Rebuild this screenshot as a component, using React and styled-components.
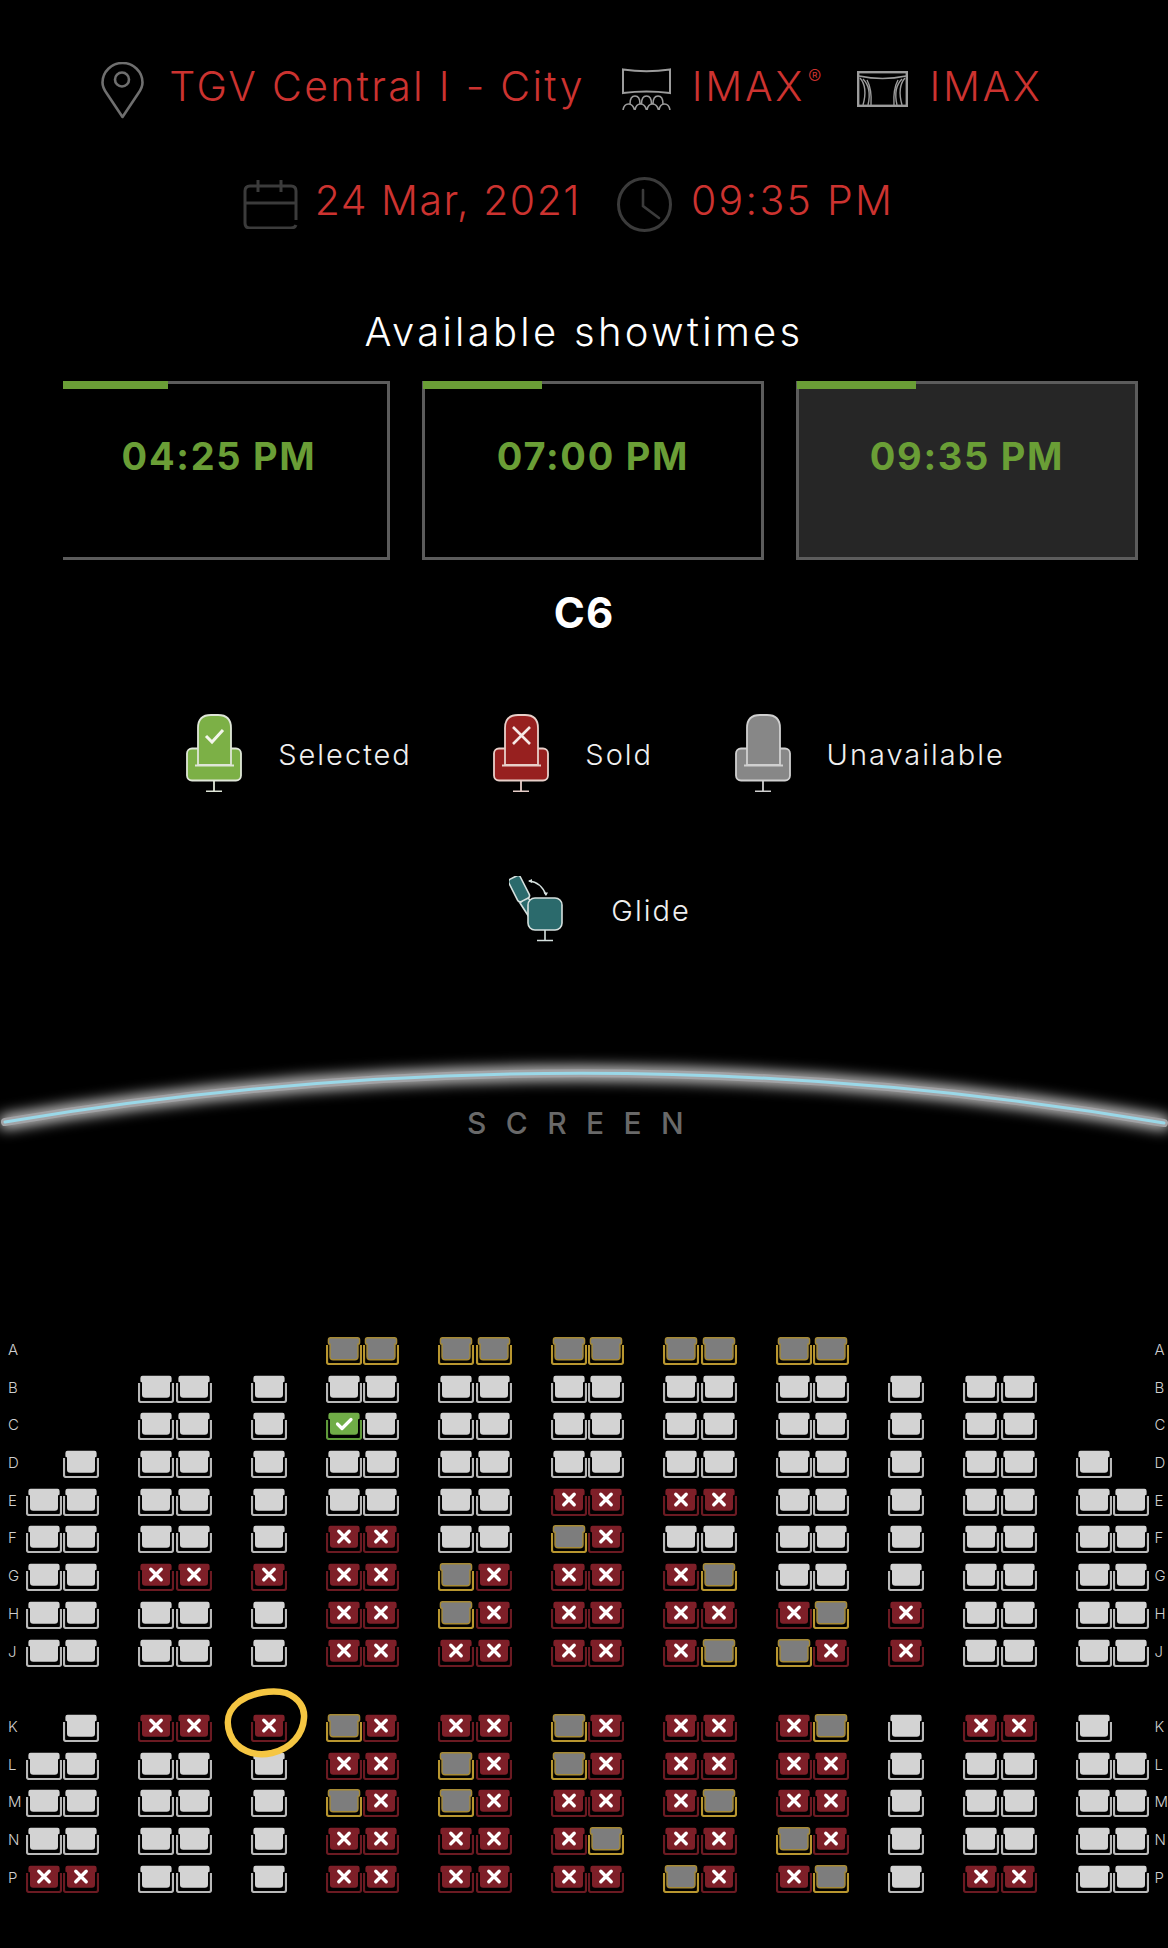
import React from "react";
import styled, { createGlobalStyle } from "styled-components";

const Global = createGlobalStyle`
  html, body { margin: 0; padding: 0; background: #000; }
  body { font-family: "Inter", "Liberation Sans", sans-serif; }
`;

const Page = styled.div`
  width: 1168px;
  height: 1948px;
  background: #000;
  overflow: hidden;
  color: #fff;
  padding-top: 60px;
  box-sizing: border-box;
`;

const InfoRow = styled.div`
  display: flex;
  align-items: center;
  justify-content: center;
  height: 60px;
  padding-right: ${(p) => p.$pr}px;
  margin-top: ${(p) => p.$mt || 0}px;
`;

const InfoIcon = styled.svg`
  display: block;
  flex: none;
  margin-left: ${(p) => p.$ml || 0}px;
  margin-right: ${(p) => p.$mr || 0}px;
  position: relative;
  top: ${(p) => p.$dy || 0}px;
`;

const InfoText = styled.span`
  font-size: 41px;
  font-weight: 300;
  color: #cc3330;
  letter-spacing: ${(p) => p.$ls ?? 2.3}px;
  line-height: 50px;
  padding-bottom: 8px;
  white-space: nowrap;
`;

const Reg = styled.sup`
  font-size: 20px;
  line-height: 0;
  vertical-align: 17px;
  margin-left: 3px;
  letter-spacing: 0;
  font-weight: 300;
`;

const Title = styled.h2`
  margin: 73px 0 0;
  height: 50px;
  line-height: 50px;
  text-align: center;
  font-size: 40px;
  font-weight: 300;
  letter-spacing: 3.3px;
  color: #fff;
`;

const CardsClip = styled.div`
  margin: 24px 0 0 63px;
  width: 1105px;
  overflow: hidden;
`;

const Cards = styled.div`
  display: flex;
  gap: 32px;
  margin-left: -15px;
`;

const Card = styled.div`
  position: relative;
  flex: none;
  box-sizing: border-box;
  width: 342px;
  height: 179px;
  border: 3px solid #5c5c5c;
  background: ${(p) => (p.$active ? "#262626" : "#000")};
  padding-top: 49px;
  text-align: center;
  font-size: 38px;
  line-height: 46px;
  font-weight: 700;
  letter-spacing: 1.7px;
  color: #6a9e36;
`;

const CardBar = styled.div`
  position: absolute;
  left: -2px;
  top: -3px;
  width: 119px;
  height: 8px;
  background: #6a9e36;
`;

const Hall = styled.div`
  margin-top: 31px;
  height: 44px;
  line-height: 44px;
  text-align: center;
  font-size: 42px;
  font-weight: 700;
  letter-spacing: 1px;
`;

const Legend = styled.div`
  display: flex;
  justify-content: center;
  gap: 81.5px;
  padding-left: ${(p) => p.$pl}px;
  margin-top: ${(p) => p.$mt}px;
`;

const LegendItem = styled.div`
  display: flex;
  align-items: center;
  gap: ${(p) => p.$gap || 36}px;
`;

const LegendText = styled.span`
  padding-top: 2px;
  font-size: 29px;
  font-weight: 300;
  letter-spacing: 2px;
  color: #f0f0f0;
`;

const ScreenArea = styled.div`
  position: relative;
  height: 287px;
  margin-top: 108px;
  padding-top: 57px;
  box-sizing: border-box;
`;

const Arc = styled.svg`
  position: absolute;
  left: 0;
  top: 0;
  display: block;
  overflow: visible;
`;

const ScreenLabel = styled.div`
  position: relative;
  text-align: center;
  font-size: 30px;
  line-height: 32px;
  font-weight: 500;
  letter-spacing: 19.4px;
  color: #696969;
  padding-left: 2px;
`;

const SeatMap = styled.div`
  display: flex;
  flex-direction: column;
`;

const SeatRow = styled.div`
  display: grid;
  grid-template-columns: 25.5px repeat(30, 37.5px) 1fr;
  height: 37.7px;
`;

const RowLabel = styled.div`
  font-size: 15px;
  font-weight: 300;
  line-height: 26px;
  color: #cfcfcf;
  padding-left: ${(p) => (p.$right ? 4 : 8)}px;
`;

const Cell = styled.div`
  position: relative;
`;

const SeatSvg = styled.svg`
  display: block;
`;

const Ring = styled.svg`
  position: absolute;
  left: -27px;
  top: -26px;
  z-index: 2;
  pointer-events: none;
`;

const seatColors = {
  o: { fill: "#d3d3d3", arm: "#b9b9b9", stroke: "none" },
  u: { fill: "#7d7d7d", arm: "#b8962f", stroke: "#a68a35" },
  x: { fill: "#7e1f28", arm: "#6b1a22", stroke: "none" },
  s: { fill: "#70ad47", arm: "#5f9a3a", stroke: "none" },
};

function Seat({ kind }) {
  const c = seatColors[kind];
  return (
    <SeatSvg width="36" height="28" viewBox="0 0 36 28">
      <path d="M1 8V25Q1 27 3 27H33Q35 27 35 25V8" fill="none" stroke={c.arm} strokeWidth="2.2" />
      <path
        d="M4.5 .8H31.5Q33.6 .8 33.6 3V6Q33.6 7.2 32.4 7.2H32V19.5Q32 22.8 28.8 22.8H7.2Q4 22.8 4 19.5V7.2H3.6Q2.4 7.2 2.4 6V3Q2.4 .8 4.5 .8Z"
        fill={c.fill}
        stroke={c.stroke}
        strokeWidth="1.4"
      />
      {kind === "x" && (
        <path d="M12.8 6.3L23.2 16.7M23.2 6.3L12.8 16.7" stroke="#fff" strokeWidth="3.4" strokeLinecap="round" />
      )}
      {kind === "s" && (
        <path d="M11.5 12L16 16.5L25 7.5" fill="none" stroke="#fff" strokeWidth="3.2" strokeLinecap="round" strokeLinejoin="round" />
      )}
    </SeatSvg>
  );
}

function Chair({ fill, line = "#dfe6d8", children }) {
  return (
    <svg width="56" height="78" viewBox="0 0 56 78">
      <rect x="1" y="34.5" width="54" height="32" rx="5" fill={fill} stroke={line} strokeWidth="1.8" />
      <path d="M12 51V14Q12 1 25 1H32Q45 1 45 14V51Z" fill={fill} stroke={line} strokeWidth="1.8" />
      <path d="M9 51.5H48" stroke={line} strokeWidth="2" />
      <path d="M28 67V77M20 77.5H36" stroke={line} strokeWidth="1.8" />
      {children}
    </svg>
  );
}

function Glide() {
  const line = "#d5e0de";
  const fill = "#2b6a6c";
  return (
    <svg width="54" height="66" viewBox="0 0 54 66">
      <g fill={fill} stroke={line} strokeWidth="1.6">
        <path d="M11 27L20 41L24 27L18 21Z" />
        <rect x="2" y="-1" width="13" height="25" rx="3" transform="rotate(-27 8 12) translate(1 2)" />
        <rect x="19" y="22" width="34" height="32" rx="7" />
      </g>
      <path d="M36 54V64M28 64.5H44" stroke={line} strokeWidth="1.6" fill="none" />
      <path d="M20 5Q32 6 37 19" fill="none" stroke={line} strokeWidth="1.4" />
      <path d="M19 5L23 3V7ZM37 20L34.5 16.5H39Z" fill={line} />
    </svg>
  );
}

const rows = [
  ["A", "........uu.uu.uu.uu.uu........"],
  ["B", "...oo.o.oo.oo.oo.oo.oo.o.oo..."],
  ["C", "...oo.o.so.oo.oo.oo.oo.o.oo..."],
  ["D", ".o.oo.o.oo.oo.oo.oo.oo.o.oo.o."],
  ["E", "oo.oo.o.oo.oo.xx.xx.oo.o.oo.oo"],
  ["F", "oo.oo.o.xx.oo.ux.oo.oo.o.oo.oo"],
  ["G", "oo.xx.x.xx.ux.xx.xu.oo.o.oo.oo"],
  ["H", "oo.oo.o.xx.ux.xx.xx.xu.x.oo.oo"],
  ["J", "oo.oo.o.xx.xx.xx.xu.ux.x.oo.oo"],
  null,
  ["K", ".o.xx.x.ux.xx.ux.xx.xu.o.xx.o."],
  ["L", "oo.oo.o.xx.ux.ux.xx.xx.o.oo.oo"],
  ["M", "oo.oo.o.ux.ux.xx.xu.xx.o.oo.oo"],
  ["N", "oo.oo.o.xx.xx.xu.xx.ux.o.oo.oo"],
  ["P", "xx.oo.o.xx.xx.xx.ux.xu.o.xx.oo"],
];

export default function App() {
  return (
    <Page>
      <Global />
      <InfoRow $pr={24}>
        <InfoIcon width="43" height="57" viewBox="0 0 43 57" $mr={25} fill="none" stroke="#6f6f6f" strokeWidth="2.6">
          <path d="M21.5 55L5.5 31C3 27.5 1.5 24 1.5 20.5A20 19.5 0 0 1 41.5 20.5C41.5 24 40 27.5 37.5 31Z" strokeLinejoin="round" />
          <circle cx="21" cy="17.5" r="7" />
        </InfoIcon>
        <InfoText>TGV Central I - City</InfoText>
        <InfoIcon width="49" height="42" viewBox="0 0 49 42" $ml={37} $mr={21} $dy={-1} fill="none" stroke="#9c9c9c" strokeWidth="2">
          <path d="M1 1.5Q24.5 5 48 1.5V25Q24.5 22 1 25Z" />
          <path d="M8 36Q8 28 13 28Q18 28 18 36M19.5 36Q19.5 28 24.5 28Q29.5 28 29.5 36M31 36Q31 28 36 28Q41 28 41 36" strokeWidth="1.6" />
          <path d="M1 42Q2 36 6.5 36Q11 36 12.5 42M13 42Q14 36 18.5 36Q23 36 24.5 42M25 42Q26 36 30.5 36Q35 36 36.5 42M37 42Q38 36 42.5 36Q47 36 48 42" strokeWidth="1.6" />
        </InfoIcon>
        <InfoText $ls={2.7}>IMAX<Reg>®</Reg></InfoText>
        <InfoIcon width="51" height="36" viewBox="0 0 51 36" $ml={36} $mr={21} $dy={-1} fill="none" stroke="#9c9c9c" strokeWidth="2">
          <rect x="1.2" y="1.2" width="48.6" height="33.6" strokeWidth="2.4" />
          <path d="M2 5Q25.5 10 49 5" strokeWidth="1.6" />
          <path d="M3 7Q11 16 6 34M6 8Q15 17 11 34M10 9Q15 18 14 34M48 7Q40 16 45 34M45 8Q36 17 40 34M41 9Q36 18 37 34" strokeWidth="1.4" />
        </InfoIcon>
        <InfoText $ls={2.7}>IMAX</InfoText>
      </InfoRow>
      <InfoRow $mt={54} $pr={31}>
        <InfoIcon width="55" height="50" viewBox="0 0 55 50" $mr={17} fill="none" stroke="#3b3b3b" strokeWidth="3">
          <path d="M53 41V12Q53 7 48 7H7Q2 7 2 12V44Q2 49 7 49H48Q52 49 53 46" />
          <path d="M2 24H53M15 1V13M38 1V13" />
        </InfoIcon>
        <InfoText $ls={1.5}>24 Mar, 2021</InfoText>
        <InfoIcon width="55" height="55" viewBox="0 0 55 55" $ml={36} $mr={19} fill="none" stroke="#3b3b3b" strokeWidth="3">
          <circle cx="27.5" cy="27.5" r="26" />
          <path d="M26 13V29L42 41" strokeWidth="2.6" strokeLinecap="round" />
        </InfoIcon>
        <InfoText>09:35 PM</InfoText>
      </InfoRow>
      <Title>Available showtimes</Title>
      <CardsClip>
        <Cards>
          <Card><CardBar />04:25 PM</Card>
          <Card><CardBar />07:00 PM</Card>
          <Card $active><CardBar />09:35 PM</Card>
        </Cards>
      </CardsClip>
      <Hall>C6</Hall>
      <Legend $mt={79} $pl={23}>
        <LegendItem>
          <Chair fill="#7cb046">
            <path d="M20 22L26 28L37 16" fill="none" stroke="#f4f6ec" strokeWidth="3" />
          </Chair>
          <LegendText>Selected</LegendText>
        </LegendItem>
        <LegendItem>
          <Chair fill="#97201f" line="#e8cfc9">
            <path d="M20 13L37 30M37 13L20 30" stroke="#f6e9e6" strokeWidth="2.6" />
          </Chair>
          <LegendText>Sold</LegendText>
        </LegendItem>
        <LegendItem>
          <Chair fill="#878787" line="#d0d0d0" />
          <LegendText>Unavailable</LegendText>
        </LegendItem>
      </Legend>
      <Legend $mt={84} $pl={32}>
        <LegendItem $gap={48}>
          <Glide />
          <LegendText>Glide</LegendText>
        </LegendItem>
      </Legend>
      <ScreenArea>
        <Arc width="1168" height="110" viewBox="0 1050 1168 110">
          <defs>
            <filter id="glow" x="-5%" y="-80%" width="110%" height="260%">
              <feGaussianBlur stdDeviation="7" />
            </filter>
          </defs>
          <path d="M5 1122Q584 1024 1164 1123" fill="none" stroke="#fff" strokeOpacity="0.9" strokeWidth="13" strokeLinecap="round" filter="url(#glow)" />
          <path d="M5 1122Q584 1024 1164 1123" fill="none" stroke="#a2a3a6" strokeWidth="8" strokeLinecap="round" />
          <path d="M5 1122Q584 1024 1164 1123" fill="none" stroke="#9ad8e8" strokeWidth="3" strokeLinecap="round" />
        </Arc>
        <ScreenLabel>SCREEN</ScreenLabel>
      </ScreenArea>
      <SeatMap>
        {rows.map((r, i) =>
          r ? (
            <SeatRow key={i}>
              <RowLabel>{r[0]}</RowLabel>
              {r[1].split("").map((k, j) => (
                <Cell key={j}>
                  {k !== "." && <Seat kind={k} />}
                  {r[0] === "K" && j === 6 && (
                    <Ring width="86" height="72" viewBox="0 0 86 72" fill="none" stroke="#f5c642" strokeWidth="6.5">
                      <path d="M62 5C75 10 81 20 80 30C79 46 68 60 48 65C30 69 12 62 6 46C1 32 4 22 16 13C28 5 48 1 62 5Z" />
                    </Ring>
                  )}
                </Cell>
              ))}
              <RowLabel $right>{r[0]}</RowLabel>
            </SeatRow>
          ) : (
            <SeatRow key={i} />
          )
        )}
      </SeatMap>
    </Page>
  );
}
